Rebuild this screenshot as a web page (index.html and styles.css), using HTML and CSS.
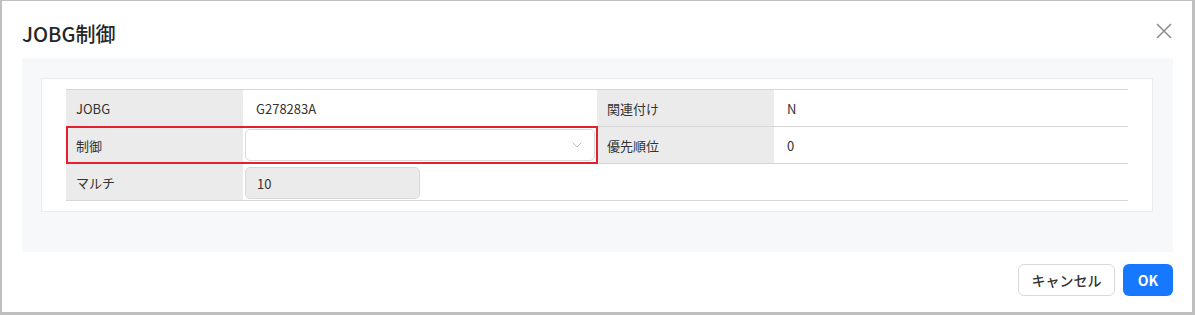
FILE: index.html
```html
<!DOCTYPE html>
<html lang="ja">
<head>
    <meta charset="UTF-8">
    <meta name="viewport" content="width=device-width, initial-scale=1.0">
    <title>JOBG制御</title>
    <link rel="stylesheet" href="styles.css">
</head>
<body>
    <div class="dialog">
        <div class="dialog-header">
            <h2 class="dialog-title">JOBG制御</h2>
            <button class="close-button" aria-label="閉じる">
                <svg width="16" height="16" viewBox="0 0 16 16">
                    <path d="M1 1 L15 15 M15 1 L1 15" stroke="#8c8c8c" stroke-width="1.5" fill="none"/>
                </svg>
            </button>
        </div>
        <div class="dialog-body">
            <div class="card">
                <div class="info-table">
                    <div class="row">
                        <div class="field">
                            <div class="label">JOBG</div>
                            <div class="value">G278283A</div>
                        </div>
                        <div class="field">
                            <div class="label">関連付け</div>
                            <div class="value">N</div>
                        </div>
                    </div>
                    <div class="row">
                        <div class="field has-error">
                            <div class="label">制御</div>
                            <div class="value value-control">
                                <div class="select">
                                    <span class="select-text"></span>
                                    <svg class="select-arrow" width="10" height="6" viewBox="0 0 10 6">
                                        <path d="M0.5 0.5 L5 5 L9.5 0.5" stroke="#bfbfbf" stroke-width="1" fill="none"/>
                                    </svg>
                                </div>
                            </div>
                        </div>
                        <div class="field">
                            <div class="label">優先順位</div>
                            <div class="value">0</div>
                        </div>
                    </div>
                    <div class="row">
                        <div class="field">
                            <div class="label">マルチ</div>
                            <div class="value value-control">
                                <input class="text-input" type="text" value="10" disabled>
                            </div>
                        </div>
                        <div class="field empty"></div>
                    </div>
                </div>
            </div>
        </div>
        <div class="dialog-footer">
            <button class="btn btn-default">キャンセル</button>
            <button class="btn btn-primary">OK</button>
        </div>
    </div>
</body>
</html>
```

FILE: styles.css
```css
body {
    margin: 0;
    background-color: #bfbfbf;
    font-family: "Noto Sans CJK JP", "Noto Sans", sans-serif;
    color: #333;
}

.dialog {
    margin: 1px 3px 3px 2px;
    height: 311px;
    background-color: #fff;
    display: flex;
    flex-direction: column;
}

.dialog-header {
    height: 57px;
    display: flex;
    justify-content: space-between;
    align-items: flex-start;
    padding: 0 20px;
}

.dialog-title {
    margin: 0;
    padding-top: 19px;
    font-size: 20px;
    line-height: 28px;
    font-weight: 500;
    color: #262626;
}

.close-button {
    margin-top: 22px;
    padding: 0;
    border: none;
    background: none;
    width: 16px;
    height: 16px;
    cursor: pointer;
}

.close-button svg {
    display: block;
}

.dialog-body {
    margin: 0 19px 0 20px;
    background-color: #f7f8fa;
    padding: 20px 20px 40px 19px;
}

.card {
    background-color: #fff;
    border: 1px solid #ebebeb;
    padding: 10px 24px;
}

.info-table {
    border-top: 1px solid #d6d6d6;
    font-size: 13px;
}

.row {
    display: flex;
    height: 36px;
    border-bottom: 1px solid #d6d6d6;
}

.field {
    flex: 1;
    display: grid;
    grid-template-columns: 1fr 2fr;
}

.field.has-error {
    position: relative;
}

.field.has-error::after {
    content: "";
    position: absolute;
    top: -1px;
    bottom: -1px;
    left: 0;
    right: -1px;
    border: 2px solid #e5202e;
    pointer-events: none;
}

.label {
    background-color: #ebebeb;
    padding-left: 10px;
    display: flex;
    align-items: center;
}

.value {
    padding-left: 13px;
    display: flex;
    align-items: center;
}

.value-control {
    padding-left: 2px;
    padding-right: 2px;
}

.select {
    flex: 1;
    height: 32px;
    box-sizing: border-box;
    border: 1px solid #d9d9d9;
    border-radius: 5px;
    background-color: #fff;
    display: flex;
    align-items: center;
    justify-content: space-between;
    padding: 0 12px;
}

.select-arrow {
    display: block;
}

.text-input {
    width: 175px;
    height: 32px;
    box-sizing: border-box;
    border: 1px solid #d9d9d9;
    border-radius: 5px;
    background-color: #ebebeb;
    padding: 0 11px;
    font-family: inherit;
    font-size: 13px;
    color: #333;
    margin-top: 2px;
}

.dialog-footer {
    display: flex;
    justify-content: flex-end;
    gap: 8px;
    padding: 12px 19px 0 0;
}

.btn {
    height: 32px;
    border-radius: 6px;
    font-family: inherit;
    font-size: 14px;
    cursor: pointer;
}

.btn-default {
    width: 97px;
    background-color: #fff;
    border: 1px solid #d9d9d9;
    color: #333;
    font-weight: 500;
}

.btn-primary {
    width: 50px;
    background-color: #1677ff;
    border: none;
    color: #fff;
    font-weight: 700;
}
```
